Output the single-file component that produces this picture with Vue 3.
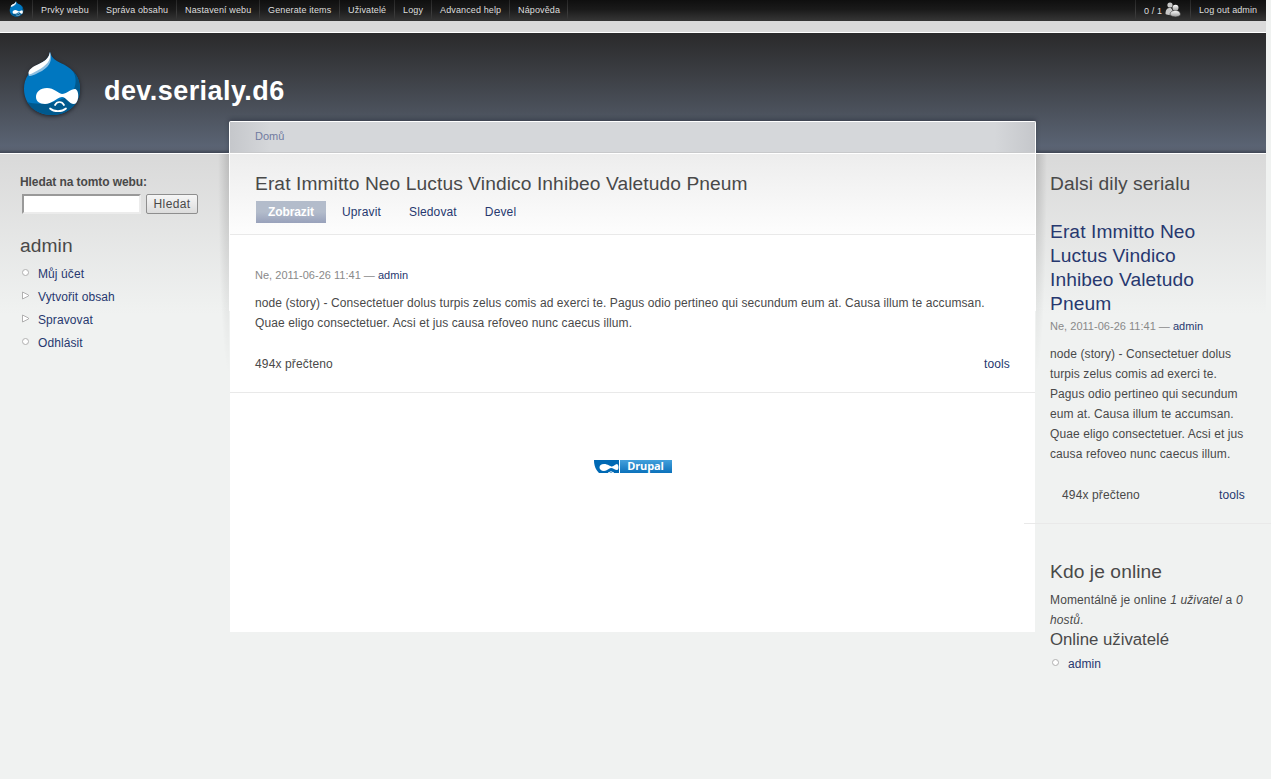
<script setup>
const menu = [
  { label: 'Prvky webu', width: 65 },
  { label: 'Správa obsahu', width: 79 },
  { label: 'Nastavení webu', width: 83 },
  { label: 'Generate items', width: 80 },
  { label: 'Uživatelé', width: 55 },
  { label: 'Logy', width: 37 },
  { label: 'Advanced help', width: 78 },
  { label: 'Nápověda', width: 59 },
]
const tabs = ['Zobrazit', 'Upravit', 'Sledovat', 'Devel']
const userMenu = [
  { label: 'Můj účet', leaf: true },
  { label: 'Vytvořit obsah', leaf: false },
  { label: 'Spravovat', leaf: false },
  { label: 'Odhlásit', leaf: true },
]
const title = 'Erat Immitto Neo Luctus Vindico Inhibeo Valetudo Pneum'
const story = 'node (story) - Consectetuer dolus turpis zelus comis ad exerci te. Pagus odio pertineo qui secundum eum at. Causa illum te accumsan. Quae eligo consectetuer. Acsi et jus causa refoveo nunc caecus illum.'
</script>

<template>
  <svg class="defs" width="0" height="0">
    <symbol id="drop" viewBox="0 0 60 66">
      <path fill="#0077c0" d="M28 1C30 8 34 10 42 13.500C52 19 58 27 58 38C58 54 45 64 30 64C14 64 2 53 2 38C2 27 8 19 18 13C25 9 27 6 28 1Z" />
      <path fill="#00598e" d="M51 20C58 33 50 46 40 48C30 53 14 54 5 51C10 59 19 64 30 64C45 64 58 54 58 38C58 31 56 25 51 20Z" />
      <path fill="#8fc0e2" d="M28 1C30 9 29 14 20 20C14 23 10 25 7 25C5 20 10 17 18 12.500C25 9 27 6 28 1Z" />
      <path fill="#fff" d="M28 1C29 8 27 12 19 17.500C14 20 10 23 7 23.500C5 19 11 15.500 18 12.500C25 9 27 6 28 1Z" />
      <path fill="#fff" d="M25 37C32 37 36 42 40 43C44 43 49 38 53 38C58 39 57 53 52 53C47 53 44 46 40 46C34 47 30 53 23 53C17 53 14 50 14 46C14 41 18 37 25 37Z" />
      <path fill="none" stroke="#fff" stroke-width="1.700" stroke-linecap="round" d="M33 54C35 50 40 50 42 54M28 57.500C32 61 40 61 44 57.500" />
    </symbol>
  </svg>
  <div class="wrap">
    <nav class="adminbar">
      <div class="home"><svg width="15" height="16"><use href="#drop" /></svg></div>
      <a v-for="m in menu" :key="m.label" class="mi" :style="{ width: m.width + 'px' }">{{ m.label }}</a>
      <span class="grow"></span>
      <a class="mi users">0 / 1
        <svg width="16" height="16" viewBox="0 0 16 16">
          <defs><linearGradient id="pg" x1="0" y1="0" x2="0" y2="1"><stop offset="0" stop-color="#fff" /><stop offset="1" stop-color="#999" /></linearGradient></defs>
          <g fill="#c8c8c8"><circle cx="5" cy="3" r="2.600" /><path d="M.5 12C.5 7 2.500 6 5 6C7 6 8 8 8 13C5 13.500 2 13 .5 12Z" /></g>
          <g fill="url(#pg)"><path stroke="#333" stroke-width=".6" d="M5 13C5 9.500 7.500 8.500 10.500 8.500C13 8.500 15.500 9.500 15.500 13C13 15.500 8 15.500 5 13Z" /><circle cx="10.500" cy="5.800" r="3" /></g>
        </svg>
      </a>
      <a class="mi last">Log out admin</a>
    </nav>
    <header class="header">
      <svg class="logo" width="60" height="66"><use href="#drop" /></svg>
      <h1>dev.serialy.d6</h1>
    </header>
    <div class="columns">
      <aside class="left">
        <label>Hledat na tomto webu:</label>
        <div class="search"><input type="text"><button>Hledat</button></div>
        <h2>admin</h2>
        <ul>
          <li v-for="i in userMenu" :key="i.label">
            <svg width="9" height="9" viewBox="0 0 9 9" fill="#fff" stroke="#b0b0b0">
              <circle v-if="i.leaf" cx="4.500" cy="4.500" r="3" /><path v-else d="M1.500 1V8L7.500 5V4Z" />
            </svg><a>{{ i.label }}</a>
          </li>
        </ul>
      </aside>
      <main class="center">
        <div class="crumb"><a>Domů</a></div>
        <div class="head">
          <h2>{{ title }}</h2>
          <div class="tabs"><a v-for="(t, i) in tabs" :key="t" :class="{ active: i === 0 }">{{ t }}</a></div>
        </div>
        <article class="node">
          <div class="meta">Ne, 2011-06-26 11:41 — <a>admin</a></div>
          <p>{{ story }}</p>
          <div class="links"><span>494x přečteno</span><a>tools</a></div>
        </article>
        <footer>
          <div class="badge">
            <svg width="25" height="13" viewBox="0 0 25 13">
              <path fill="#0069b4" d="M0 0H25V13H5C2 10 0 6 0 0Z" />
              <path fill="#fff" d="M10 4C14 4 16 6.500 18 6.500C20 6.500 21 4 23 4C25 5 25 10 23 10C21 10 19 8 17 8C15 8 13 11 10 11C7 11 5.500 9 5.500 7.500C5.500 5.500 7 4 10 4Z" />
              <path fill="none" stroke="#fff" d="M14 13Q17 10.500 20 13" />
            </svg>
            <b>Drupal</b>
          </div>
        </footer>
      </main>
      <aside class="right">
        <h2>Dalsi dily serialu</h2>
        <h2 class="teaser"><a>{{ title }}</a></h2>
        <div class="meta">Ne, 2011-06-26 11:41 — <a>admin</a></div>
        <p>{{ story }}</p>
        <div class="links"><span>494x přečteno</span><a>tools</a></div>
        <div class="rule"></div>
        <h2>Kdo je online</h2>
        <p class="online">Momentálně je online <em>1 uživatel</em> a <em>0 hostů</em>.</p>
        <h3>Online uživatelé</h3>
        <ul>
          <li><svg width="9" height="9" viewBox="0 0 9 9" fill="#fff" stroke="#b0b0b0"><circle cx="4.500" cy="4.500" r="3" /></svg><a>admin</a></li>
        </ul>
      </aside>
    </div>
  </div>
</template>

<style>
body { margin: 0; background: #f0f2f1; overflow: hidden; }
</style>

<style scoped>
.defs { display: block; }
.wrap { width: 1266px; height: 779px; font: 12px/20px "Liberation Sans", Arial, sans-serif; letter-spacing: .09px; color: #494949; }
h1, h2, h3, p, ul { margin: 0; padding: 0; font-weight: normal; }
a { color: #27386f; }
.adminbar { display: flex; height: 21px; background: linear-gradient(#0f0f0f, #1a1a1a 45%, #363636); font-size: 9px; line-height: 20px; letter-spacing: .13px; }
.home { width: 32px; height: 21px; display: flex; padding: 1px 0 0 9px; box-sizing: border-box; }
.mi { box-sizing: border-box; color: #dedede; padding: 0 0 0 8px; height: 20px; border: 0 solid; border-image: linear-gradient(#222, #3c3c3c 60%, #303030) 1; border-width: 0 0 0 1px; white-space: nowrap; }
.mi:nth-of-type(8) { border-width: 0 1px; }
.grow { flex: 1; }
.users { display: flex; gap: 3px; line-height: 22px; width: 55px; }
.users svg { margin-top: 2px; }
.last { width: 76px; letter-spacing: .08px; }
.header { box-sizing: content-box; margin-top: 11px; height: 120px; border-top: 1px solid #fff; border-bottom: 1px solid #fff; display: flex; align-items: flex-start; background: linear-gradient(#2a2a2b, #3c3f44 35%, #5a6373 94%, #596170 97%, #3e4452); box-shadow: 0 -11px #dadada; }
.logo { margin: 18px 0 0 22px; filter: drop-shadow(0 1px 2px #1c2028); }
h1 { font-size: 27px; font-weight: bold; line-height: 34px; letter-spacing: .43px; color: #fff; margin: 41px 0 0 22px; }
.columns { display: flex; align-items: flex-start; height: 625px; background: linear-gradient(#d9d9d9, #f0f2f1 160px); }
.left { width: 229px; height: 240px; box-sizing: border-box; padding: 18px 0 0 20px; background: radial-gradient(ellipse 11px 220px at 100% 0, rgba(0,0,0,.14), transparent); }
label { display: block; font-weight: bold; letter-spacing: -.08px; }
.search { display: flex; gap: 5px; margin: 2px 0 0 2px; }
input { box-sizing: border-box; width: 119px; height: 20px; border: 2px solid; border-color: #999 #ececec #ececec #999; background: #fff; padding: 0; }
button { box-sizing: border-box; width: 52px; height: 20px; border: 1px solid #8e8e8e; border-radius: 2px; background: linear-gradient(#f6f6f6, #dcdcdc); font: 12px/18px "Liberation Sans", Arial, sans-serif; letter-spacing: .35px; color: #494949; padding: 0; }
h2 { font-size: 19.2px; line-height: 24px; }
.left h2 { margin-top: 20px; }
ul { list-style: none; margin-top: 5px; }
li { display: flex; height: 23px; line-height: 23px; }
li svg { margin: 5px 8px 0 1px; }
.center { width: 807px; height: 511px; margin-top: -33px; box-sizing: border-box; border: solid #fff; border-width: 1px 1px 0; background: #fff; box-shadow: 0 -2px 4px rgba(20,25,40,.35); clip-path: polygon(-6px -6px, 813px -6px, 813px 31px, 807px 31px, 807px 190px, 806px 190px, 806px 511px, 1px 511px, 1px 190px, 0 190px, 0 31px, -6px 31px); border-radius: 2px 2px 0 0; }
.crumb { height: 31px; box-sizing: border-box; border-bottom: 1px solid #c8c9cb; padding: 4px 25px; font-size: 11px; letter-spacing: 0; background: linear-gradient(90deg, #c5c7cb, #d5d7da 5%, #d5d7da 95%, #c5c7cb); }
.crumb a { color: #717ba0; }
.head { border-top: 1px solid #fff; height: 82px; box-sizing: border-box; padding: 18px 25px 0; background: linear-gradient(#ededed, #fdfdfd); border-bottom: 1px solid #e9e9e9; }
.tabs { display: flex; gap: 4px; margin: 5px 0 0 1px; }
.tabs a { padding: 0 12px; height: 22px; line-height: 22px; letter-spacing: .14px; }
.tabs .active { width: 46px; background: linear-gradient(#b3bccb 50%, #98a1bb); color: #fff; font-weight: bold; letter-spacing: -.1px; }
.node { padding: 30px 25px 0; height: 127px; border-bottom: 1px solid #e9e9e9; }
.meta { font-size: 11px; letter-spacing: .02px; color: #898989; }
.node p { margin-top: 8px; }
.links { display: flex; justify-content: space-between; margin-top: 21px; letter-spacing: .14px; }
footer { padding: 67px 0 0; }
.badge { display: flex; gap: 1px; width: 78px; height: 13px; margin: 0 auto; }
.badge b { flex: 1; background: linear-gradient(#43a0dc, #0c72bb); color: #fff; font: bold 11px/12px "Open Sans", sans-serif; letter-spacing: -.1px; text-align: center; }
.right { width: 195px; padding: 18px 21px 0 14px; flex: none; background: radial-gradient(ellipse 11px 220px at 0 0, rgba(0,0,0,.14), transparent); }
.teaser { margin-top: 24px; padding-right: 3px; }
.right p { margin-top: 8px; }
.right .links { padding-left: 12px; }
.right .rule { position: relative; z-index: 1; height: 1px; background: #e9e9e9; margin: 18px -26px 36px; }
.right p.online { margin-top: 6px; letter-spacing: .13px; }
h3 { font-size: 16.8px; line-height: 20px; letter-spacing: -.02px; }
.right ul { margin-top: 3px; }
</style>
